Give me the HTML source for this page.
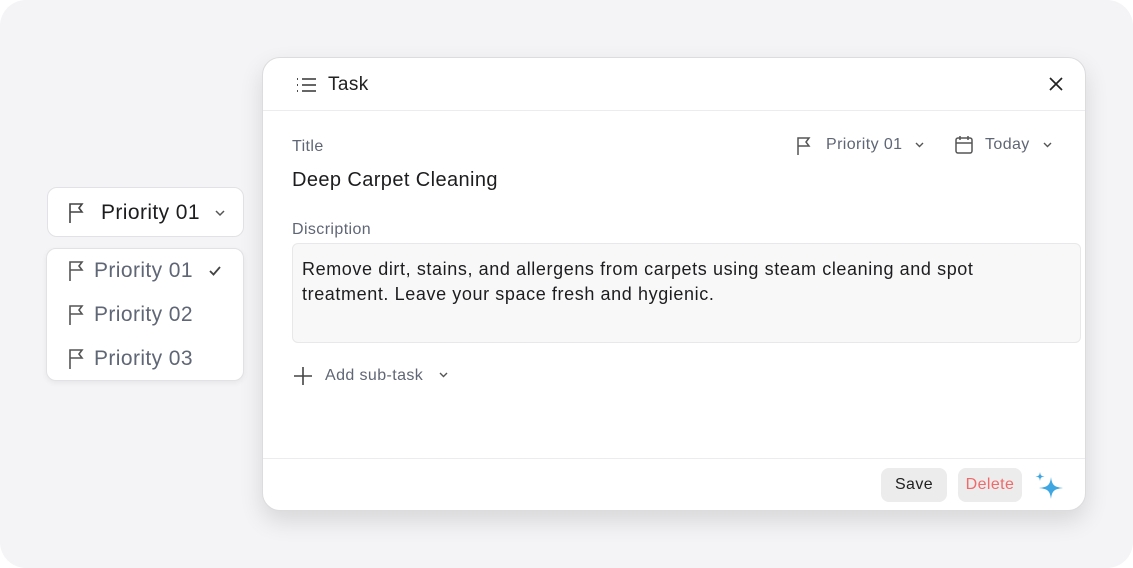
<!DOCTYPE html>
<html><head><style>
*{box-sizing:border-box;margin:0;padding:0}
body{width:1133px;height:568px;background:#fff;font-family:"Liberation Sans",sans-serif;position:relative;overflow:hidden;letter-spacing:0.4px}
.bg{position:absolute;left:0;top:0;width:1133px;height:568px;background:#f4f4f6;border-radius:26px}
.abs{position:absolute}
.pill{left:47px;top:187px;width:197px;height:50px;background:#fff;border:1px solid #e2e2e6;border-radius:10px}
.menu{left:46px;top:248px;width:198px;height:133px;background:#fff;border:1px solid #e2e2e6;border-radius:10px;box-shadow:0 2px 6px rgba(0,0,0,.06)}
.card{left:262px;top:57px;width:824px;height:454px;background:#fff;border:1px solid #dcdcdf;border-radius:18px;box-shadow:0 10px 24px rgba(0,0,0,.12);overflow:hidden}
.t{position:absolute;white-space:nowrap}
.gray{color:#5f6675}
</style></head><body>
<div class="bg"></div>
<div class="abs pill">
 <svg class="abs" style="left:19px;top:14px" width="20" height="22" viewBox="0 0 20 22" fill="none" stroke="#444" stroke-width="1.6"><path d="M3 21V2h12l-3 4 3 4H3"/></svg>
 <div class="t" style="left:53px;top:13px;font-size:21px;color:#1d1d1f">Priority 01</div>
 <svg class="abs" style="left:166px;top:21px" width="12" height="8" viewBox="0 0 12 8" fill="none" stroke="#555" stroke-width="1.5"><path d="M2 2l4 4 4-4"/></svg>
</div>
<div class="abs menu">
 <svg class="abs" style="left:20px;top:11px" width="20" height="22" viewBox="0 0 20 22" fill="none" stroke="#555" stroke-width="1.6"><path d="M3 21V2h12l-3 4 3 4H3"/></svg>
 <div class="t gray" style="left:47px;top:10px;font-size:21px">Priority 01</div>
 <svg class="abs" style="left:161px;top:16px" width="14" height="12" viewBox="0 0 14 12" fill="none" stroke="#444" stroke-width="1.8"><path d="M2 6l3.5 3.5L12 2"/></svg>
 <svg class="abs" style="left:20px;top:55px" width="20" height="22" viewBox="0 0 20 22" fill="none" stroke="#555" stroke-width="1.6"><path d="M3 21V2h12l-3 4 3 4H3"/></svg>
 <div class="t gray" style="left:47px;top:54px;font-size:21px">Priority 02</div>
 <svg class="abs" style="left:20px;top:99px" width="20" height="22" viewBox="0 0 20 22" fill="none" stroke="#555" stroke-width="1.6"><path d="M3 21V2h12l-3 4 3 4H3"/></svg>
 <div class="t gray" style="left:47px;top:98px;font-size:21px">Priority 03</div>
</div>
<div class="abs card">
 <svg class="abs" style="left:32px;top:18px" width="22" height="18" viewBox="0 0 22 18" fill="none" stroke="#333" stroke-width="1.6"><path d="M7 3h14M7 9h14M7 15h14"/><path d="M2 3h1M2 9h1M2 15h1" stroke-width="1.8"/></svg>
 <div class="t" style="left:65px;top:16px;font-size:19px;color:#222">Task</div>
 <svg class="abs" style="left:785px;top:18px" width="16" height="16" viewBox="0 0 16 16" fill="none" stroke="#222" stroke-width="1.7"><path d="M2 2l12 12M14 2L2 14"/></svg>
 <div class="abs" style="left:0;top:52px;width:824px;height:1px;background:#ececee"></div>
 <div class="t gray" style="left:29px;top:80px;font-size:16px">Title</div>
 <div class="t" style="left:29px;top:111px;font-size:20px;color:#1d1d1f">Deep Carpet Cleaning</div>
 <svg class="abs" style="left:533px;top:78px" width="18" height="20" viewBox="0 0 18 20" fill="none" stroke="#555" stroke-width="1.5"><path d="M2 19V2h11l-3 4 3 4H2"/></svg>
 <div class="t gray" style="left:563px;top:78px;font-size:16px">Priority 01</div>
 <svg class="abs" style="left:651px;top:83px" width="11" height="8" viewBox="0 0 11 8" fill="none" stroke="#555" stroke-width="1.4"><path d="M2 2l3.5 3.5L9 2"/></svg>
 <svg class="abs" style="left:691px;top:77px" width="20" height="20" viewBox="0 0 20 20" fill="none" stroke="#555" stroke-width="1.5"><rect x="2" y="3" width="16" height="15" rx="2"/><path d="M2 8h16M6 1v4M14 1v4"/></svg>
 <div class="t gray" style="left:722px;top:78px;font-size:16px">Today</div>
 <svg class="abs" style="left:779px;top:83px" width="11" height="8" viewBox="0 0 11 8" fill="none" stroke="#555" stroke-width="1.4"><path d="M2 2l3.5 3.5L9 2"/></svg>
 <div class="t gray" style="left:29px;top:163px;font-size:16px">Discription</div>
 <div class="abs" style="left:29px;top:185px;width:789px;height:100px;background:#f8f8f9;border:1px solid #e8e8ea;border-radius:6px"></div>
 <div class="abs" style="left:39px;top:199px;width:720px;font-size:18px;line-height:25px;color:#1d1d1f;letter-spacing:0.6px">Remove dirt, stains, and allergens from carpets using steam cleaning and spot treatment. Leave your space fresh and hygienic.</div>
 <svg class="abs" style="left:30px;top:308px" width="20" height="20" viewBox="0 0 20 20" fill="none" stroke="#444" stroke-width="1.6"><path d="M10 1v18M1 10h18"/></svg>
 <div class="t gray" style="left:62px;top:309px;font-size:16px">Add sub-task</div>
 <svg class="abs" style="left:175px;top:313px" width="11" height="8" viewBox="0 0 11 8" fill="none" stroke="#555" stroke-width="1.4"><path d="M2 2l3.5 3.5L9 2"/></svg>
 <div class="abs" style="left:0;top:400px;width:824px;height:1px;background:#ececee"></div>
 <div class="abs" style="left:618px;top:410px;width:66px;height:34px;background:#ececed;border-radius:8px;font-size:16px;color:#222;text-align:center;line-height:34px">Save</div>
 <div class="abs" style="left:695px;top:410px;width:64px;height:34px;background:#ececed;border-radius:8px;font-size:16px;color:#f06a6a;text-align:center;line-height:34px">Delete</div>
 <svg class="abs" style="left:772px;top:413px" width="30" height="28" viewBox="0 0 30 28" fill="#3ea6e0"><path d="M16 6 C17 14 19 16 28 17 C19 18 17 20 16 28 C15 20 13 18 4 17 C13 16 15 14 16 6Z"/><path d="M5 1 C5.6 4.5 6 5 9.5 5.5 C6 6 5.6 6.5 5 10 C4.4 6.5 4 6 0.5 5.5 C4 5 4.4 4.5 5 1Z"/></svg>
</div>
</body></html>
